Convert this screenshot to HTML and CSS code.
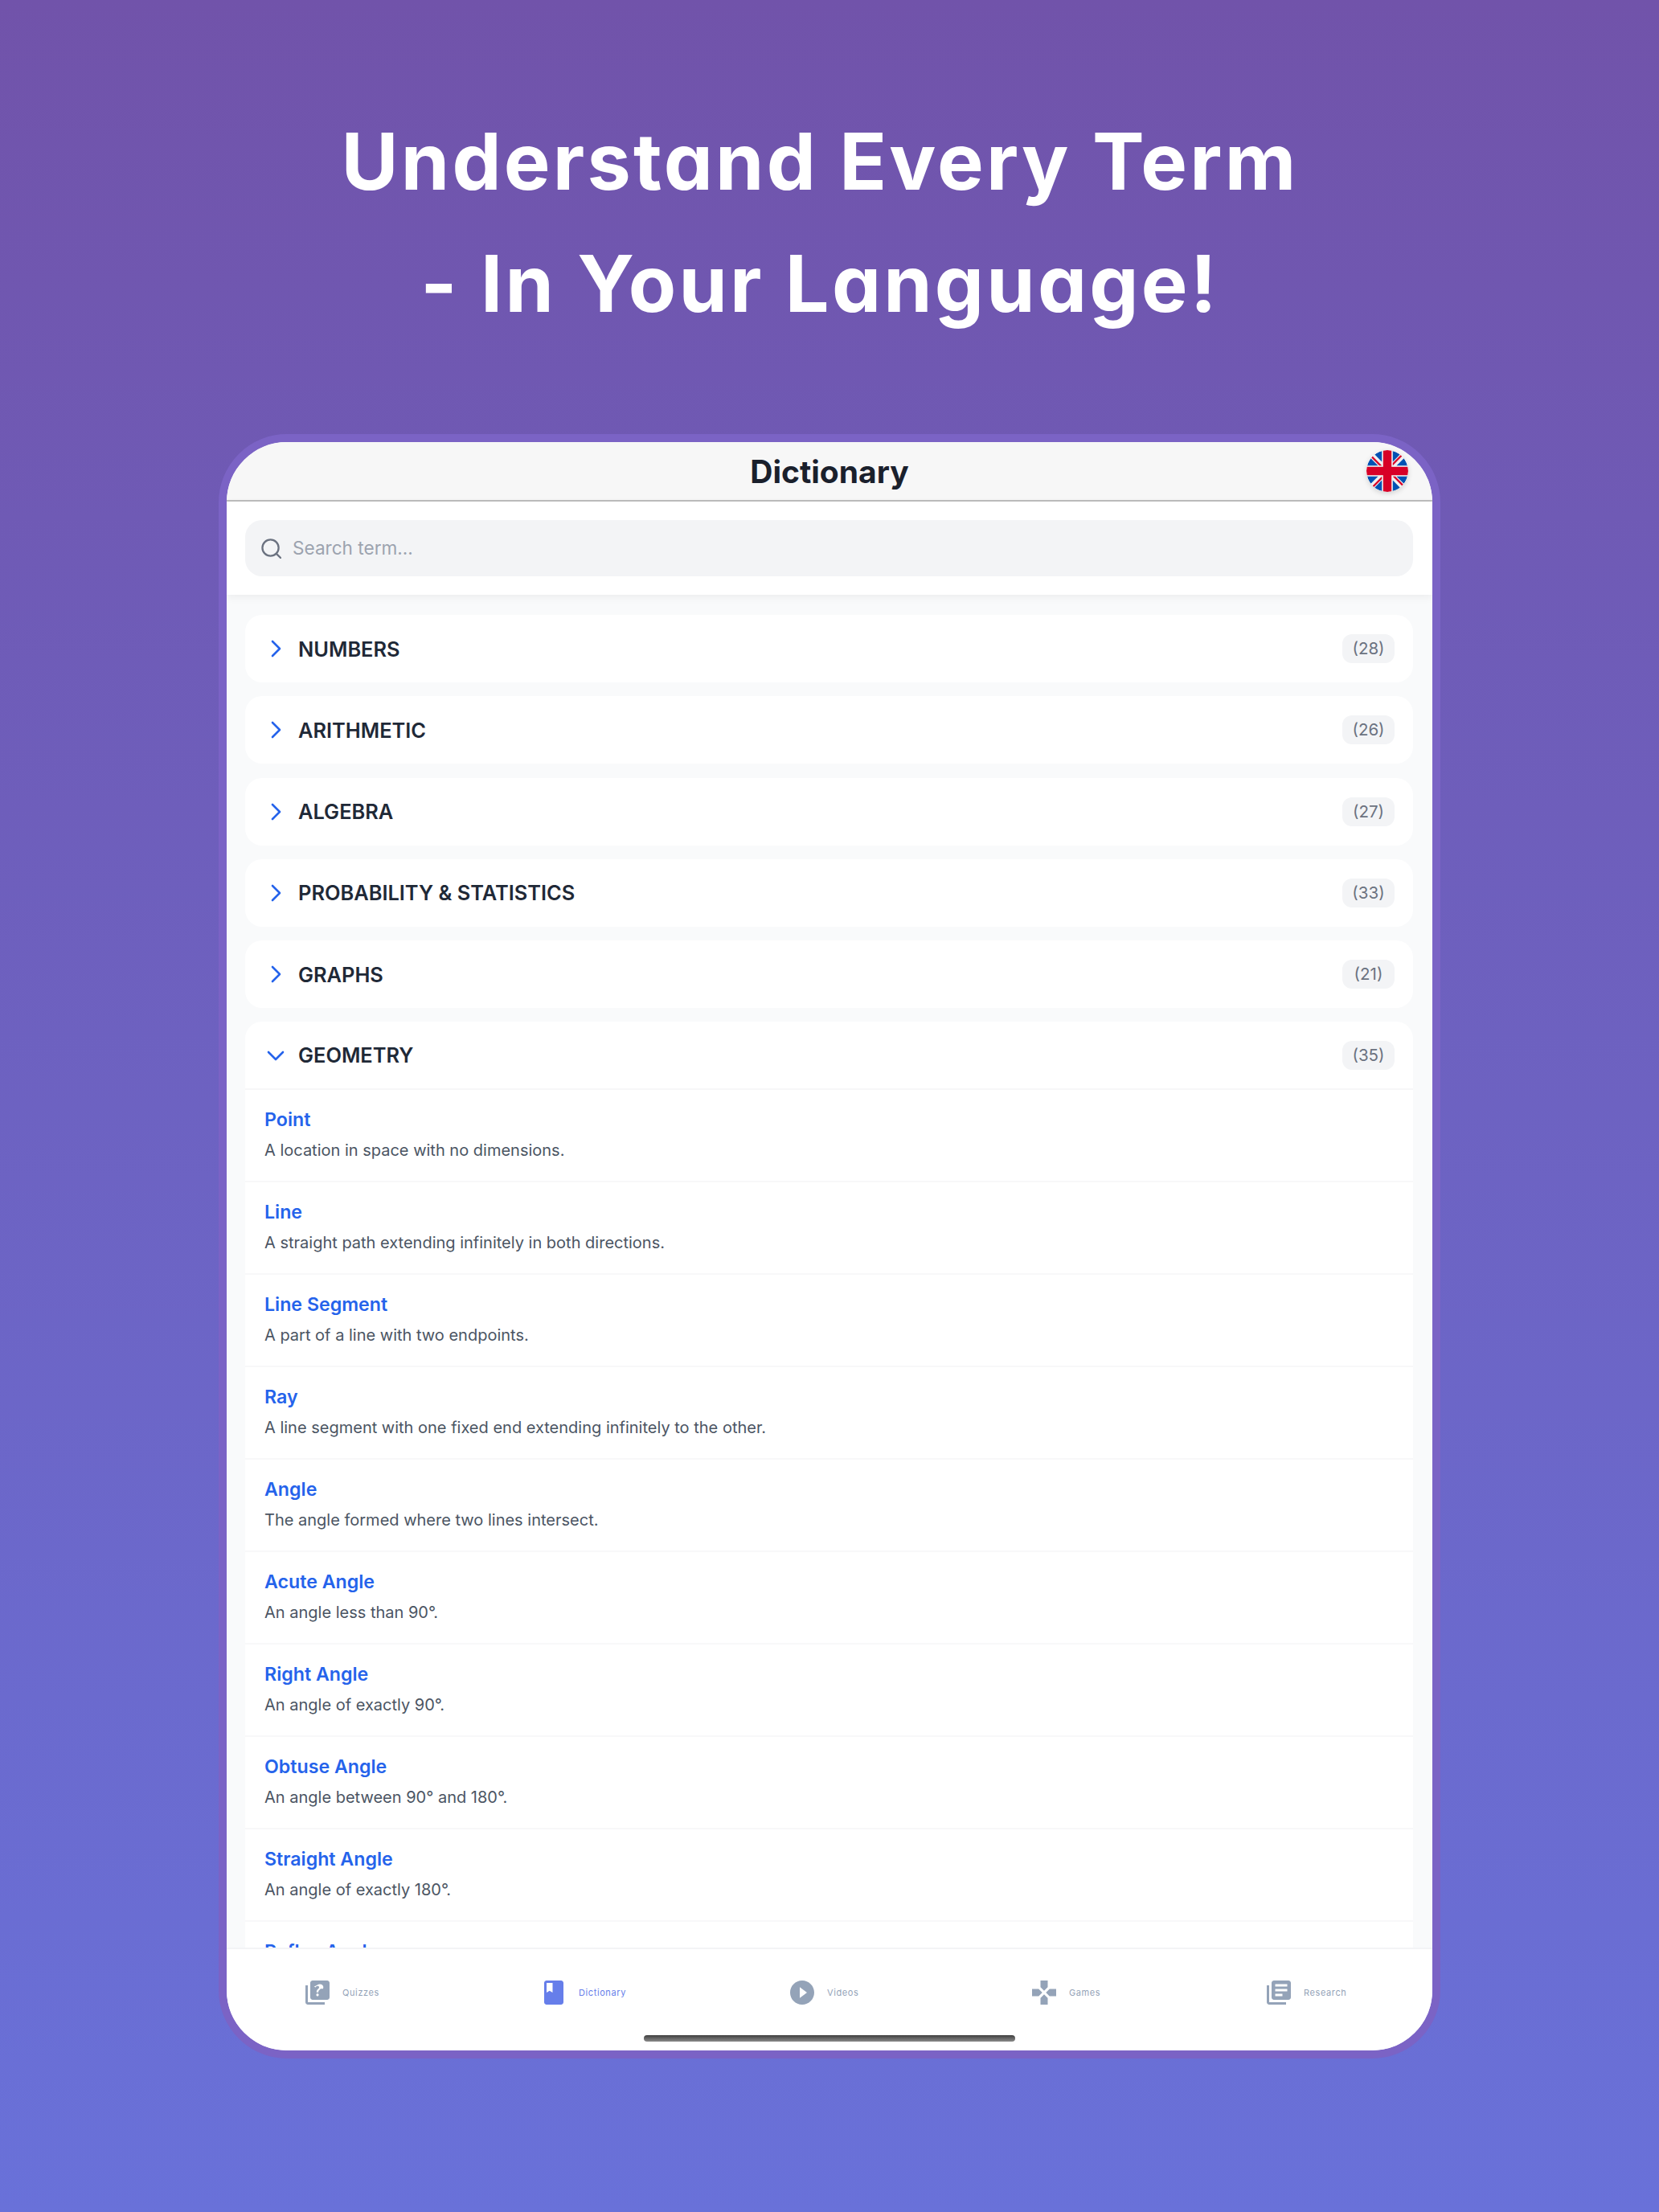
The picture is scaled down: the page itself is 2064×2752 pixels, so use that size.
FILE: index.html
```html
<!DOCTYPE html>
<html lang="en">
<head>
  <meta charset="UTF-8">
  <title>Dictionary</title>
  <link rel="stylesheet" href="styles.css">
</head>
<body>
  <h1 class="headline">Understand Every Term<br>- In Your Language!</h1>

  <div class="device">
    <header class="topbar">
      <span></span>
      <h2 class="topbar-title">Dictionary</h2>
      <svg class="flag" viewBox="0 0 512 512">
        <defs><clipPath id="flag-clip"><circle cx="256" cy="256" r="256"/></clipPath></defs>
        <g clip-path="url(#flag-clip)">
          <circle cx="256" cy="256" r="256" fill="#f0f0f0"/>
          <g fill="#0052b4">
            <path d="M52.92 100.142C32.811 126.305 17.648 156.46 8.819 189.219h133.178L52.92 100.142z"/>
            <path d="M503.181 189.219c-8.829-32.758-23.993-62.913-44.101-89.076l-89.075 89.076h133.176z"/>
            <path d="M8.819 322.784c8.83 32.758 23.993 62.913 44.101 89.075l89.074-89.075H8.819z"/>
            <path d="M411.858 52.921c-26.163-20.109-56.317-35.272-89.076-44.102v133.177l89.076-89.075z"/>
            <path d="M100.142 459.079c26.163 20.109 56.318 35.272 89.076 44.102V370.005l-89.076 89.074z"/>
            <path d="M189.217 8.819c-32.758 8.83-62.913 23.993-89.075 44.101l89.075 89.075V8.819z"/>
            <path d="M322.783 503.181c32.758-8.83 62.913-23.993 89.075-44.101l-89.075-89.075v133.176z"/>
            <path d="M370.005 322.784l89.075 89.076c20.108-26.162 35.272-56.318 44.101-89.076H370.005z"/>
          </g>
          <g fill="#d80027">
            <rect x="205" y="0" width="102" height="512"/>
            <rect x="0" y="205" width="512" height="102"/>
            <path d="M322.783 322.784l114.236 114.236c5.254-5.252 10.266-10.743 15.048-16.435l-97.802-97.802h-31.482z"/>
            <path d="M189.215 322.784L74.98 437.019c5.252 5.254 10.743 10.266 16.435 15.048l97.802-97.804v-31.479z"/>
            <path d="M189.217 189.217L74.981 74.98c-5.254 5.252-10.266 10.743-15.048 16.435l97.803 97.803h31.481z"/>
            <path d="M322.783 189.219L437.02 74.981c-5.252-5.254-10.743-10.266-16.435-15.047l-97.802 97.803v31.482z"/>
          </g>
        </g>
      </svg>
    </header>

    <div class="search-wrap">
      <label class="search-box">
        <svg class="search-icon" viewBox="0 0 26 26">
          <circle cx="12" cy="12" r="10.5"/>
          <path d="M19.6 19.6L25 25"/>
        </svg>
        <input class="search-input" placeholder="Search term...">
      </label>
    </div>

    <main class="content">
      <section class="card">
        <div class="card-head"><svg class="chevron" viewBox="0 0 28 28"><path d="M10 5l9 9-9 9"/></svg><span class="card-title">NUMBERS</span><span class="count">(28)</span></div>
      </section>
      <section class="card">
        <div class="card-head"><svg class="chevron" viewBox="0 0 28 28"><path d="M10 5l9 9-9 9"/></svg><span class="card-title">ARITHMETIC</span><span class="count">(26)</span></div>
      </section>
      <section class="card">
        <div class="card-head"><svg class="chevron" viewBox="0 0 28 28"><path d="M10 5l9 9-9 9"/></svg><span class="card-title">ALGEBRA</span><span class="count">(27)</span></div>
      </section>
      <section class="card">
        <div class="card-head"><svg class="chevron" viewBox="0 0 28 28"><path d="M10 5l9 9-9 9"/></svg><span class="card-title">PROBABILITY &amp; STATISTICS</span><span class="count">(33)</span></div>
      </section>
      <section class="card">
        <div class="card-head"><svg class="chevron" viewBox="0 0 28 28"><path d="M10 5l9 9-9 9"/></svg><span class="card-title">GRAPHS</span><span class="count">(21)</span></div>
      </section>
      <section class="card">
        <div class="card-head card-head-open"><svg class="chevron" viewBox="0 0 28 28"><path d="M5 10l9 9 9-9"/></svg><span class="card-title">GEOMETRY</span><span class="count">(35)</span></div>
        <div class="term"><div class="term-name">Point</div><div class="term-desc">A location in space with no dimensions.</div></div>
        <div class="term"><div class="term-name">Line</div><div class="term-desc">A straight path extending infinitely in both directions.</div></div>
        <div class="term"><div class="term-name">Line Segment</div><div class="term-desc">A part of a line with two endpoints.</div></div>
        <div class="term"><div class="term-name">Ray</div><div class="term-desc">A line segment with one fixed end extending infinitely to the other.</div></div>
        <div class="term"><div class="term-name">Angle</div><div class="term-desc">The angle formed where two lines intersect.</div></div>
        <div class="term"><div class="term-name">Acute Angle</div><div class="term-desc">An angle less than 90°.</div></div>
        <div class="term"><div class="term-name">Right Angle</div><div class="term-desc">An angle of exactly 90°.</div></div>
        <div class="term"><div class="term-name">Obtuse Angle</div><div class="term-desc">An angle between 90° and 180°.</div></div>
        <div class="term"><div class="term-name">Straight Angle</div><div class="term-desc">An angle of exactly 180°.</div></div>
        <div class="term"><div class="term-name">Reflex Angle</div><div class="term-desc">An angle greater than 180°.</div></div>
      </section>
    </main>

    <nav class="tabs">
      <div class="tab">
        <svg class="tab-icon" viewBox="0 0 24 24"><path d="M4 6H2v14c0 1.1.9 2 2 2h14v-2H4V6zm16-4H8c-1.1 0-2 .9-2 2v12c0 1.1.9 2 2 2h12c1.1 0 2-.9 2-2V4c0-1.1-.9-2-2-2zm-7.99 13c-.59 0-1.05-.47-1.05-1.05 0-.59.47-1.04 1.05-1.04.59 0 1.04.45 1.04 1.04-.01.58-.45 1.05-1.04 1.05zm2.5-6.17c-.63.93-1.23 1.21-1.56 1.81-.13.24-.18.4-.18 1.18h-1.52c0-.41-.06-1.08.26-1.65.41-.73 1.18-1.16 1.63-1.8.48-.68.21-1.94-1.14-1.94-.88 0-1.32.67-1.5 1.23l-1.37-.57C11.51 5.96 12.52 5 13.99 5c1.23 0 2.08.56 2.51 1.26.37.61.58 1.73.01 2.57z"/></svg>
        <span>Quizzes</span>
      </div>
      <div class="tab tab-active">
        <svg class="tab-icon" viewBox="0 0 24 24"><path d="M18 2H6c-1.1 0-2 .9-2 2v16c0 1.1.9 2 2 2h12c1.100 0 2-.9 2-2V4c0-1.100-.9-2-2-2zM6 4h5v8l-2.500-1.500L6 12V4z"/></svg>
        <span>Dictionary</span>
      </div>
      <div class="tab">
        <svg class="tab-icon" viewBox="0 0 24 24"><path d="M12 2C6.480 2 2 6.480 2 12s4.480 10 10 10 10-4.480 10-10S17.520 2 12 2zm-2 14.500v-9l6 4.500-6 4.500z"/></svg>
        <span>Videos</span>
      </div>
      <div class="tab">
        <svg class="tab-icon" viewBox="0 0 24 24"><path d="M15 7.500V2H9v5.500l3 3 3-3zM7.500 9H2v6h5.500l3-3-3-3zM9 16.500V22h6v-5.500l-3-3-3 3zM16.500 9l-3 3 3 3H22V9h-5.500z"/></svg>
        <span>Games</span>
      </div>
      <div class="tab">
        <svg class="tab-icon" viewBox="0 0 24 24"><path d="M4 6H2v14c0 1.100.9 2 2 2h14v-2H4V6zm16-4H8c-1.100 0-2 .9-2 2v12c0 1.100.9 2 2 2h12c1.100 0 2-.9 2-2V4c0-1.100-.9-2-2-2zm-1 9H9V9h10v2zm-4 4H9v-2h6v2zm4-8H9V5h10v2z"/></svg>
        <span>Research</span>
      </div>
      <div class="home-bar"></div>
    </nav>
  </div>
</body>
</html>
```

FILE: styles.css
```css
* {
  box-sizing: border-box;
}
html, body {
  margin: 0;
  height: 2752px;
}
body {
  font-family: Inter, "Liberation Sans", sans-serif;
  background: linear-gradient(180deg, #7153aa 0%, #6971d9 100%);
  padding-top: 125px;
  overflow: hidden;
}
.headline {
  margin: 0;
  padding-right: 24px;
  color: #fff;
  text-align: center;
  font-size: 97px;
  font-weight: 700;
  line-height: 152px;
  letter-spacing: 3.2px;
  font-feature-settings: "cv11";
}
.device {
  width: 1520px;
  height: 2021px;
  margin: 111px auto 0;
  border: 10px solid #7b63c5;
  border-radius: 85px;
  background: #f9fafb;
  overflow: hidden;
  display: flex;
  flex-direction: column;
}
.topbar {
  height: 74px;
  flex: none;
  display: grid;
  grid-template-columns: 1fr auto 1fr;
  align-items: center;
  background: #f7f7f7;
  border-bottom: 2px solid #bdbdbd;
  padding-right: 30px;
}
.topbar-title {
  margin: 0;
  font-size: 39px;
  font-weight: 700;
  color: #1a202c;
  padding-left: 30px;
}
.flag {
  width: 52px;
  height: 52px;
  justify-self: end;
  border-radius: 50%;
  box-shadow: 0 2px 6px rgba(0,0,0,0.15);
}
.search-wrap {
  flex: none;
  height: 116px;
  padding: 23px 24px 23px 23px;
  background: #fff;
  box-shadow: 0 3px 10px rgba(0,0,0,0.06);
  position: relative;
}
.search-box {
  height: 70px;
  display: flex;
  align-items: center;
  gap: 14px;
  padding-left: 20px;
  background: #f3f4f6;
  border-radius: 21px;
}
.search-icon {
  width: 25px;
  height: 25px;
  flex: none;
  fill: none;
  stroke: #6b7280;
  stroke-width: 2.4;
  stroke-linecap: round;
}
.search-input {
  flex: 1;
  border: 0;
  outline: 0;
  background: transparent;
  font-family: inherit;
  font-size: 22.6px;
  padding: 0 0 2px;
}
.search-input::placeholder {
  color: #9ca3af;
  opacity: 1;
}
.content {
  flex: 1;
  min-height: 0;
  overflow: hidden;
  padding: 25px 24px 0 23px;
  display: flex;
  flex-direction: column;
  gap: 17.25px;
}
.card {
  flex: none;
  background: #fff;
  border-radius: 21px;
}
.card-head {
  height: 84px;
  display: flex;
  align-items: center;
  padding: 0 23px 0 24px;
}
.card-head-open {
  height: 85px;
  border-bottom: 2px solid #f7f7f8;
}
.chevron {
  width: 28px;
  height: 28px;
  flex: none;
  fill: none;
  stroke: #2563eb;
  stroke-width: 2.6;
  stroke-linecap: round;
  stroke-linejoin: round;
}
.card-title {
  flex: 1;
  margin-left: 14px;
  font-size: 25.4px;
  font-weight: 600;
  color: #1f2937;
}
.count {
  width: 65px;
  height: 36px;
  border-radius: 12px;
  background: #f3f4f6;
  color: #6b7280;
  font-size: 20.5px;
  line-height: 36px;
  text-align: center;
}
.term {
  height: 115px;
  padding: 21px 24px 0;
  border-bottom: 2px solid #f8f8f9;
}
.term-name {
  font-size: 23.2px;
  font-weight: 600;
  line-height: 32px;
  color: #2563eb;
}
.term-desc {
  margin-top: 4px;
  font-size: 20px;
  line-height: 36px;
  color: #4b5563;
}
.tabs {
  flex: none;
  height: 128px;
  background: #fff;
  border-top: 2px solid #f3f4f6;
  position: relative;
  display: grid;
  grid-template-columns: 294px 309px 301px 292px auto;
  padding: 36px 0 0 95px;
  align-items: start;
}
.tab {
  display: flex;
  align-items: center;
  gap: 13px;
  font-size: 11px;
  font-weight: 400;
  color: #94a3b8;
  letter-spacing: 0.6px;
}
.tab-icon {
  width: 36px;
  height: 36px;
  flex: none;
  fill: #94a3b8;
}
.tab-active {
  color: #667eea;
}
.tab-active .tab-icon {
  fill: #667eea;
}
.home-bar {
  position: absolute;
  left: 519px;
  bottom: 11px;
  width: 462px;
  height: 8px;
  border-radius: 4px;
  background: linear-gradient(180deg, #3f3f3f, #8a8a8a);
}
```
